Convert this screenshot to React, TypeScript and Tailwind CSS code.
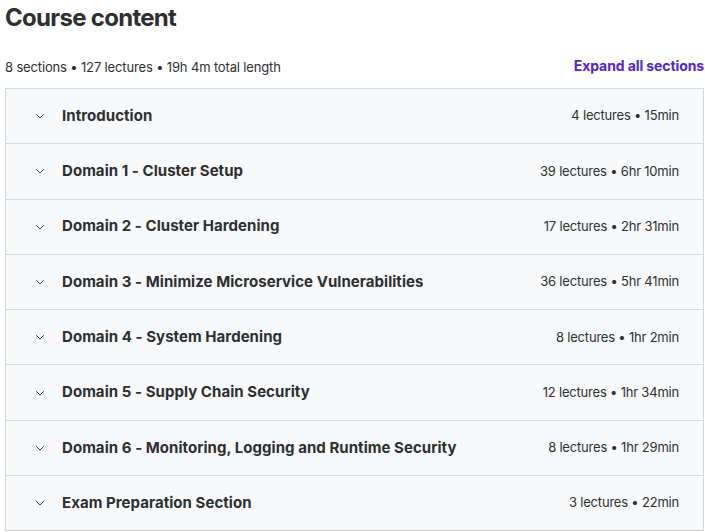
import React from "react";

const sections = [
  { title: "Introduction", meta: "4 lectures • 15min" },
  { title: "Domain 1 - Cluster Setup", meta: "39 lectures • 6hr 10min" },
  { title: "Domain 2 - Cluster Hardening", meta: "17 lectures • 2hr 31min" },
  { title: "Domain 3 - Minimize Microservice Vulnerabilities", meta: "36 lectures • 5hr 41min" },
  { title: "Domain 4 - System Hardening", meta: "8 lectures • 1hr 2min" },
  { title: "Domain 5 - Supply Chain Security", meta: "12 lectures • 1hr 34min" },
  { title: "Domain 6 - Monitoring, Logging and Runtime Security", meta: "8 lectures • 1hr 29min" },
  { title: "Exam Preparation Section", meta: "3 lectures • 22min" },
];

function Chevron() {
  return (
    <svg width="12" height="12" viewBox="0 0 12 12" fill="none" className="shrink-0">
      <path d="M2.5 4.5 L6 8 L9.5 4.5" stroke="#3e4143" strokeWidth="1" strokeLinecap="round" strokeLinejoin="round" />
    </svg>
  );
}

export default function App() {
  return (
    <div className="w-[705px] h-[532px] overflow-hidden bg-white text-[#2d2f31]" style={{ fontFamily: "Inter, 'Noto Sans', sans-serif" }}>
      <div className="pl-[5px] pr-[1px]">
        <h2 className="text-[24px] leading-[36px] font-bold tracking-[-0.7px] text-[#2d2f31]">Course content</h2>
        <div className="flex items-end justify-between mt-[20px] h-[22px]">
          <span className="text-[13px] leading-[20px] tracking-[-0.15px] text-[#2d2f31] pb-[1px]">8 sections • 127 lectures • 19h 4m total length</span>
          <span className="text-[14px] leading-[20px] font-bold tracking-[-0.1px] text-[#5624d0] pb-[2px]">Expand all sections</span>
        </div>
        <div className="mt-[10px] border border-[#d1d7dc] border-b-0">
          {sections.map((s) => (
            <div key={s.title} className="h-[55.3px] flex items-center bg-[#f7f9fa] border-b border-[#d1d7dc] pl-[28px] pr-[24px]">
              <Chevron />
              <span className="ml-[16px] text-[15px] font-bold tracking-[0.05px] text-[#2d2f31]">{s.title}</span>
              <span className="ml-auto text-[13px] tracking-[-0.2px] text-[#2d2f31]">{s.meta}</span>
            </div>
          ))}
        </div>
      </div>
    </div>
  );
}
